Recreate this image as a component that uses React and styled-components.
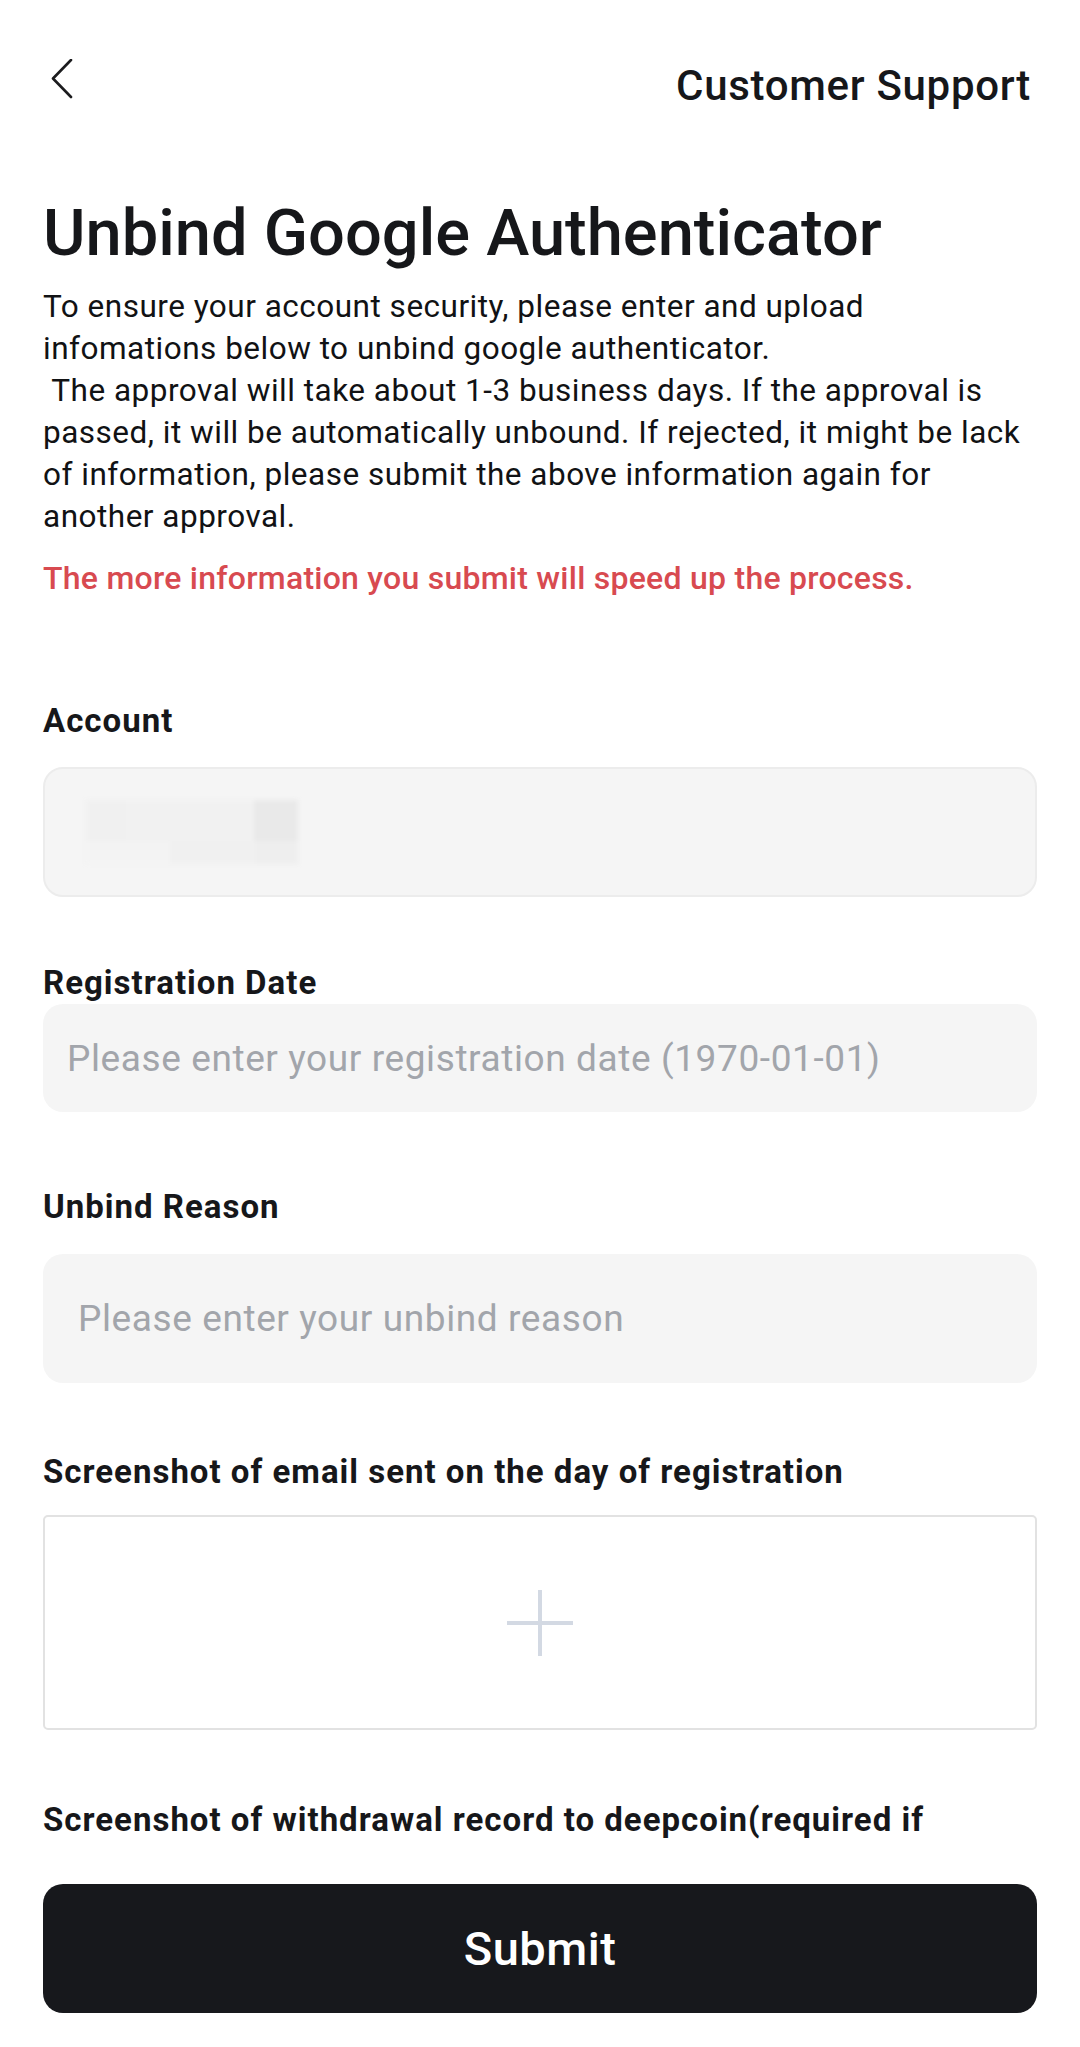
import React from "react";
import styled, { createGlobalStyle } from "styled-components";

const Global = createGlobalStyle`
  html, body { margin: 0; padding: 0; background: #ffffff; }
  body { font-family: Roboto, "Noto Sans", sans-serif; color: #16171a; }
  * { box-sizing: border-box; }
`;

const Page = styled.div`
  width: 1080px;
  min-height: 2047px;
  padding: 0 43px;
  display: flex;
  flex-direction: column;
  background: #fff;
`;

const Header = styled.header`
  display: flex;
  justify-content: space-between;
  align-items: flex-start;
  padding-top: 58px;
`;

const BackButton = styled.button`
  border: 0;
  background: none;
  padding: 0;
  margin: 1px 0 0 8px;
  width: 22px;
  height: 40px;
  display: flex;
  cursor: pointer;
`;

const SupportLink = styled.a`
  font-family: Roboto, sans-serif;
  font-size: 42px;
  line-height: 56px;
  font-weight: 500;
  color: #16171a;
  text-decoration: none;
  letter-spacing: 0.7px;
  margin-right: 6px;
`;

const Title = styled.h1`
  margin: 79px 0 0;
  font-size: 65px;
  line-height: 80px;
  font-weight: 500;
  color: #16171a;
`;

const Description = styled.p`
  margin: 13px 0 0;
  font-size: 31.5px;
  line-height: 42px;
  font-weight: 400;
  letter-spacing: 0.5px;
  white-space: pre-wrap;
  color: #111214;
`;

const Notice = styled.p`
  margin: 19px 0 0;
  font-size: 32px;
  line-height: 42px;
  font-weight: 500;
  letter-spacing: 0.25px;
  color: #d84a50;
`;

const Field = styled.div`
  display: flex;
  flex-direction: column;
  margin-top: ${(p) => p.$top}px;
  gap: ${(p) => p.$gap}px;
`;

const Label = styled.label`
  font-family: Roboto, sans-serif;
  font-size: 33px;
  line-height: 42px;
  font-weight: 700;
  letter-spacing: 1px;
  color: #16171a;
  white-space: nowrap;
`;

const InputBox = styled.div`
  height: ${(p) => p.$h}px;
  border-radius: 20px;
  background: #f5f5f5;
  border: ${(p) => (p.$bordered ? "2px solid #ececec" : "0")};
  display: flex;
  align-items: center;
  padding-left: ${(p) => p.$pad}px;
`;

const Input = styled.input`
  border: 0;
  outline: 0;
  background: transparent;
  width: 100%;
  font-family: Roboto, sans-serif;
  font-size: 37px;
  letter-spacing: 0.6px;
  color: #16171a;
  padding: 0;
  &::placeholder { color: #a2a5ab; }
`;

const Blurred = styled.div`
  width: 212px;
  height: 64px;
  display: flex;
  flex-direction: column;
  filter: blur(2px);
`;

const BlurRow = styled.div`
  height: ${(p) => p.$h}px;
  display: flex;
`;

const BlurCell = styled.div`
  width: ${(p) => p.$w}px;
  height: 100%;
  background: ${(p) => p.$c};
`;

const UploadBox = styled.div`
  height: 215px;
  border: 2px solid #e2e2e2;
  border-radius: 5px;
  background: #fff;
  display: flex;
  align-items: center;
  justify-content: center;
`;

const SubmitButton = styled.button`
  margin-top: 43px;
  height: 129px;
  width: 100%;
  border: 0;
  border-radius: 20px;
  background: #17181c;
  color: #ffffff;
  font-family: Roboto, sans-serif;
  font-size: 47px;
  letter-spacing: 0.5px;
  font-weight: 500;
  cursor: pointer;
`;

const ChevronLeft = () => (
  <svg width="22" height="40" viewBox="0 0 22 40" fill="none">
    <polyline points="20,1 2,19.5 20,38" stroke="#1c1c1e" strokeWidth="2.6" strokeLinecap="round" strokeLinejoin="round" />
  </svg>
);

const PlusIcon = () => (
  <svg width="68" height="68" viewBox="0 0 68 68" fill="none">
    <line x1="34" y1="1" x2="34" y2="67" stroke="#d3d9e3" strokeWidth="4" />
    <line x1="1" y1="34" x2="67" y2="34" stroke="#d3d9e3" strokeWidth="4" />
  </svg>
);

const description =
  "To ensure your account security, please enter and upload infomations below to unbind google authenticator.\n The approval will take about 1-3 business days. If the approval is passed, it will be automatically unbound. If rejected, it might be lack of information, please submit the above information again for another approval.";

export default function App() {
  return (
    <>
      <Global />
      <Page>
        <Header>
          <BackButton aria-label="Back">
            <ChevronLeft />
          </BackButton>
          <SupportLink href="#">Customer Support</SupportLink>
        </Header>

        <Title>Unbind Google Authenticator</Title>
        <Description>{description}</Description>
        <Notice>The more information you submit will speed up the process.</Notice>

        <Field $top={101} $gap={25}>
          <Label>Account</Label>
          <InputBox $h={130} $pad={41} $bordered>
            <Blurred>
              <BlurRow $h={41}>
                <BlurCell $w={40} $c="#f0f0f0" />
                <BlurCell $w={128} $c="#f1f1f1" />
                <BlurCell $w={44} $c="#e9e9e9" />
              </BlurRow>
              <BlurRow $h={23}>
                <BlurCell $w={84} $c="#f3f3f3" />
                <BlurCell $w={86} $c="#f0f0f0" />
                <BlurCell $w={42} $c="#eeeeee" />
              </BlurRow>
            </Blurred>
          </InputBox>
        </Field>

        <Field $top={65} $gap={0}>
          <Label>Registration Date</Label>
          <InputBox $h={108} $pad={24}>
            <Input placeholder="Please enter your registration date (1970-01-01)" />
          </InputBox>
        </Field>

        <Field $top={74} $gap={26}>
          <Label>Unbind Reason</Label>
          <InputBox $h={129} $pad={35}>
            <Input placeholder="Please enter your unbind reason" />
          </InputBox>
        </Field>

        <Field $top={68} $gap={22}>
          <Label>Screenshot of email sent on the day of registration</Label>
          <UploadBox>
            <PlusIcon />
          </UploadBox>
        </Field>

        <Field $top={69} $gap={0}>
          <Label>Screenshot of withdrawal record to deepcoin(required if</Label>
        </Field>

        <SubmitButton>Submit</SubmitButton>
      </Page>
    </>
  );
}
